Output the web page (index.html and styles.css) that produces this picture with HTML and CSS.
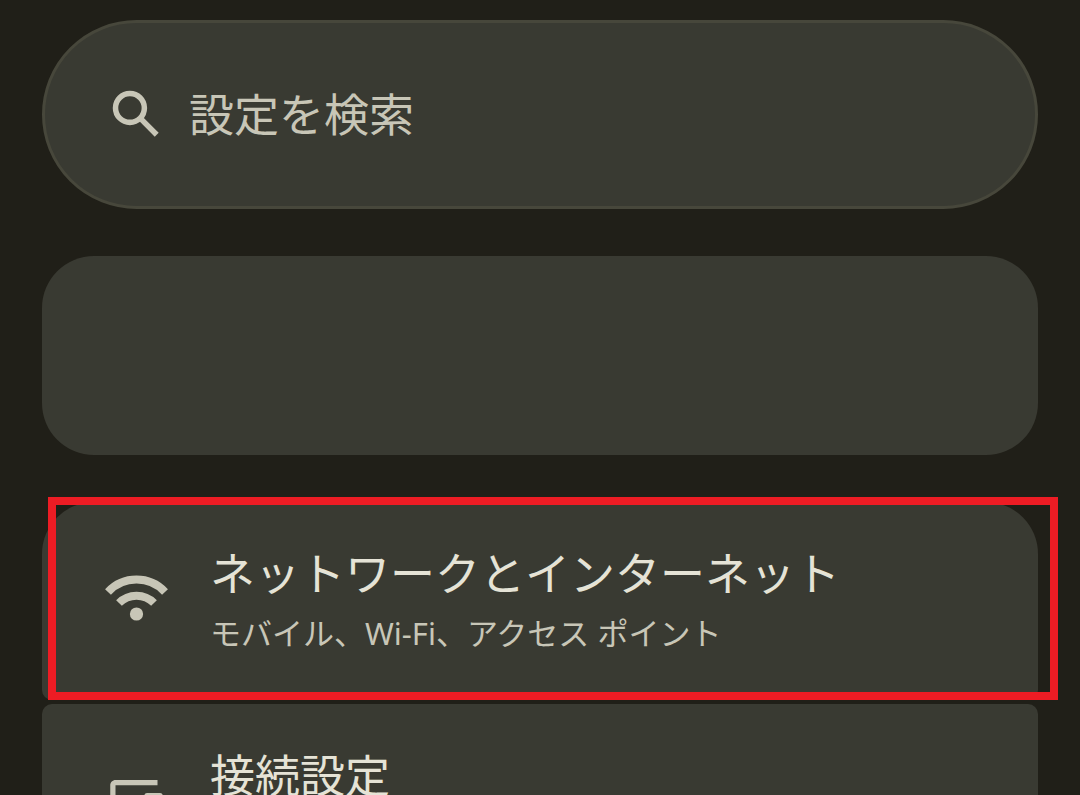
FILE: index.html
```html
<!DOCTYPE html>
<html lang="ja">
<head>
    <meta charset="UTF-8">
    <meta name="viewport" content="width=device-width, initial-scale=1.0">
    <title>設定</title>
    <link rel="stylesheet" href="styles.css">
</head>
<body>
    <main class="settings">
        <label class="search-bar">
            <svg class="icon" viewBox="0 0 24 24" aria-hidden="true">
                <g fill="none" stroke="currentColor" stroke-width="2.1">
                    <circle cx="9.5" cy="9.500" r="5.5"/>
                    <path d="M13.2 13.2L19.7 19.7"/>
                </g>
            </svg>
            <input class="search-input" type="search" placeholder="設定を検索">
        </label>

        <div class="card"></div>

        <nav class="settings-list">
            <a class="settings-item" href="#network">
                <svg class="icon" viewBox="0 0 63 63" aria-hidden="true">
                    <g fill="none" stroke="currentColor" stroke-width="8">
                        <path d="M3 22A39 39 0 0 1 60 22"/>
                        <path d="M14 33A24.5 24.5 0 0 1 49 33"/>
                    </g>
                    <circle cx="31.5" cy="44" r="6.6" fill="currentColor"/>
                </svg>
                <span class="item-text">
                    <span class="item-title">ネットワークとインターネット</span>
                    <span class="item-summary">モバイル、Wi-Fi、アクセス ポイント</span>
                </span>
                <span class="highlight"></span>
            </a>
            <a class="settings-item" href="#devices">
                <svg class="icon" viewBox="0 0 24 24" aria-hidden="true">
                    <path fill="currentColor" d="M4 5h16V3H4c-1.1 0-2 .9-2 2v11H0v3h14v-3H4V5zm17 3h-5c-.55 0-1 .45-1 1v10c0 .55.45 1 1 1h5c.55 0 1-.45 1-1V9c0-.55-.45-1-1-1zm-1 9h-3v-7h3v7z"/>
                </svg>
                <span class="item-text">
                    <span class="item-title">接続設定</span>
                    <span class="item-summary"></span>
                </span>
            </a>
        </nav>
    </main>
</body>
</html>
```

FILE: styles.css
```css
:root {
    --bg-color: #201f18;
    --card-color: #393a32;
    --outline-color: #47473b;
    --text-color: #e5e3d6;
    --muted-color: #c8c6b7;
    --highlight-color: #ed1c24;
}

* {
    margin: 0;
    padding: 0;
    box-sizing: border-box;
}

body {
    height: 100vh;
    overflow: hidden;
    background: var(--bg-color);
    color: var(--text-color);
    font-family: "Noto Sans", "Noto Sans CJK JP", sans-serif;
}

.settings {
    display: flex;
    flex-direction: column;
    gap: 47px;
    padding: 20px 42px;
}

.icon {
    flex: none;
    width: 63px;
    height: 63px;
    color: var(--muted-color);
}

/* 検索バー */
.search-bar {
    display: flex;
    align-items: center;
    gap: 21px;
    padding: 60px;
    border: 3px solid var(--outline-color);
    border-radius: 95px;
    background: var(--card-color);
}

.search-input {
    flex: 1;
    min-width: 0;
    height: 63px;
    border: none;
    outline: none;
    background: transparent;
    color: var(--text-color);
    font-family: inherit;
    font-size: 45px;
}

.search-input::placeholder {
    color: var(--muted-color);
    opacity: 1;
}

.card {
    min-height: 199px;
    border-radius: 52px;
    background: var(--card-color);
}

/* 設定リスト */
.settings-list {
    display: flex;
    flex-direction: column;
    gap: 4px;
}

.settings-item {
    position: relative;
    display: flex;
    align-items: center;
    gap: 42px;
    padding: 39px 63px;
    border-radius: 10px;
    background: var(--card-color);
    color: inherit;
    text-decoration: none;
}

.settings-item:first-child {
    border-top-left-radius: 52px;
    border-top-right-radius: 52px;
}

.item-text {
    display: flex;
    flex-direction: column;
    padding-bottom: 2px;
}

.item-title {
    font-size: 45px;
    line-height: 66px;
}

.item-summary {
    min-height: 52px;
    color: var(--muted-color);
    font-size: 31px;
    line-height: 52px;
}

/* 赤枠 */
.highlight {
    position: absolute;
    top: -5px;
    right: -20px;
    bottom: 0;
    left: 6px;
    border: 8px solid var(--highlight-color);
    z-index: 1;
}
```
